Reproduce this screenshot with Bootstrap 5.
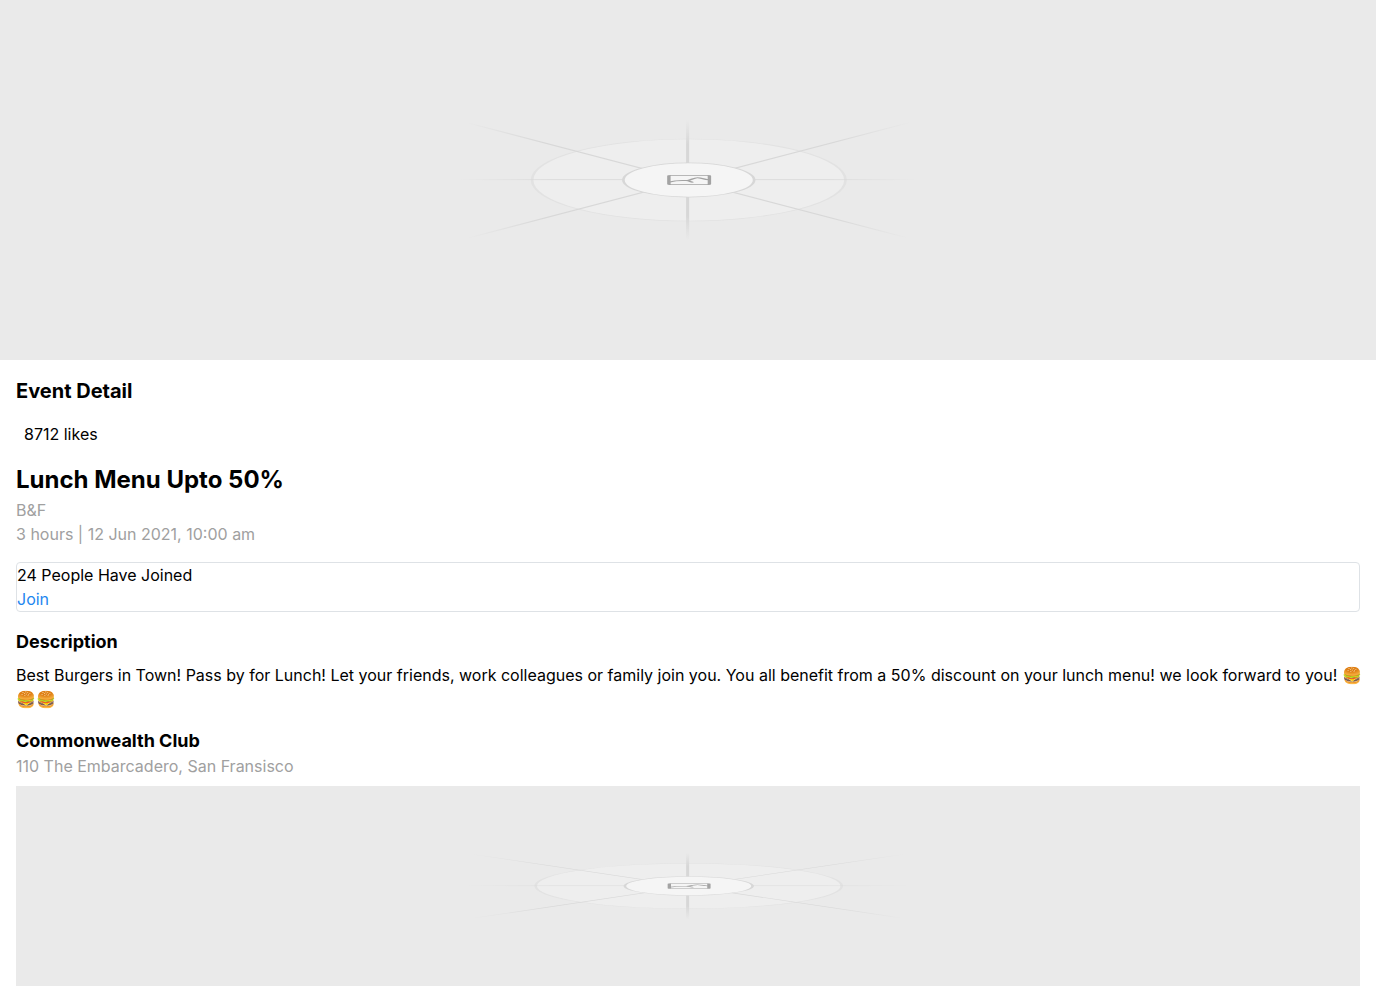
<!DOCTYPE html>
<html lang="en">
<head>
<meta charset="utf-8">
<meta name="viewport" content="width=device-width, initial-scale=1">
<title>Event Detail</title>
<link href="https://cdn.jsdelivr.net/npm/bootstrap@5.3.0/dist/css/bootstrap.min.css" rel="stylesheet">
<style>
  body { font-family: Inter, sans-serif; font-size: 16px; line-height: 24px; color: #000; background: #fff; }
  .hero-art { height: 360px; background: #eaeaea; }
  .map-art { height: 200px; background: #eaeaea; }
  .page-title { font-size: 20px; line-height: 30px; font-weight: 700; }
  .event-title { font-size: 24px; line-height: 36px; font-weight: 700; }
  .section-title { font-size: 18px; line-height: 27px; font-weight: 700; }
  .meta-text { color: #a0a0a0; }
  .join-box { border: 1px solid #dee2e6; border-radius: 4px; }
  .join-link { color: #1e87f0; }
  .description-text { margin-right: -8px; }
</style>
</head>
<body>
<svg class="hero-art d-block w-100" viewBox="0 0 360 360" preserveAspectRatio="none" role="img" aria-label="Event image placeholder">
  <defs>
    <radialGradient id="axisFade" gradientUnits="userSpaceOnUse" cx="180" cy="180" r="60">
      <stop offset="0.6" stop-color="#d7d7d7"/>
      <stop offset="1" stop-color="#d7d7d7" stop-opacity="0"/>
    </radialGradient>
    <radialGradient id="diagonalFade" gradientUnits="userSpaceOnUse" cx="180" cy="180" r="82">
      <stop offset="0.65" stop-color="#d8d8d8"/>
      <stop offset="1" stop-color="#d8d8d8" stop-opacity="0"/>
    </radialGradient>
    <g id="placeholder" fill="none">
      <circle cx="180.2" cy="180" r="41" fill="#eee" stroke="#e2e2e2" stroke-width="0.7"/>
      <g fill="url(#axisFade)">
        <rect x="179.5" y="120" width="0.8" height="120"/>
        <rect x="120" y="179.3" width="120" height="0.8"/>
      </g>
      <path d="M122 122.500 238 238.500M238 122.500 122 238.500" stroke="url(#diagonalFade)" stroke-width="0.8"/>
      <circle cx="180.200" cy="180" r="17.100" fill="#f5f5f5" stroke="#d7d7d7" stroke-width="0.7"/>
      <g stroke="#a3a3a3" stroke-width="0.9">
        <rect x="175" y="175.400" width="10.600" height="9.200" rx="0.5"/>
        <path d="M175 182.200C176.500 180.800 177.500 180.600 178.500 180.600L179.700 180.600C180.600 181 180.800 182 181.400 182.400M179.700 180.600C180.800 180.200 181.600 177.700 182.500 177.700C183.500 177.700 184.200 179.600 185.600 179.800" stroke-width="1"/>
      </g>
    </g>
  </defs>
  <use href="#placeholder"/>
</svg>

<main class="p-3">
  <h1 class="page-title mb-3">Event Detail</h1>
  <p class="ps-2 mb-3">8712 likes</p>
  <h2 class="event-title mb-0">Lunch Menu Upto 50%</h2>
  <p class="meta-text mb-0">B&amp;F</p>
  <p class="meta-text mb-3">3 hours | 12 Jun 2021, 10:00 am</p>

  <div class="join-box mb-3">
    <div>24 People Have Joined</div>
    <div><a class="join-link text-decoration-none" href="#">Join</a></div>
  </div>

  <h3 class="section-title mb-2">Description</h3>
  <p class="description-text mb-3">Best Burgers in Town! Pass by for Lunch! Let your friends, work colleagues or family join you. You all benefit from a 50% discount on your lunch menu! we look forward to you! 🍔🍔🍔</p>

  <h3 class="section-title mb-0">Commonwealth Club</h3>
  <p class="meta-text mb-2">110 The Embarcadero, San Fransisco</p>
  <svg class="map-art d-block w-100" viewBox="0 0 360 360" preserveAspectRatio="none" role="img" aria-label="Map placeholder">
    <use href="#placeholder"/>
  </svg>
</main>
<script src="https://cdn.jsdelivr.net/npm/bootstrap@5.3.0/dist/js/bootstrap.bundle.min.js"></script>
</body>
</html>
